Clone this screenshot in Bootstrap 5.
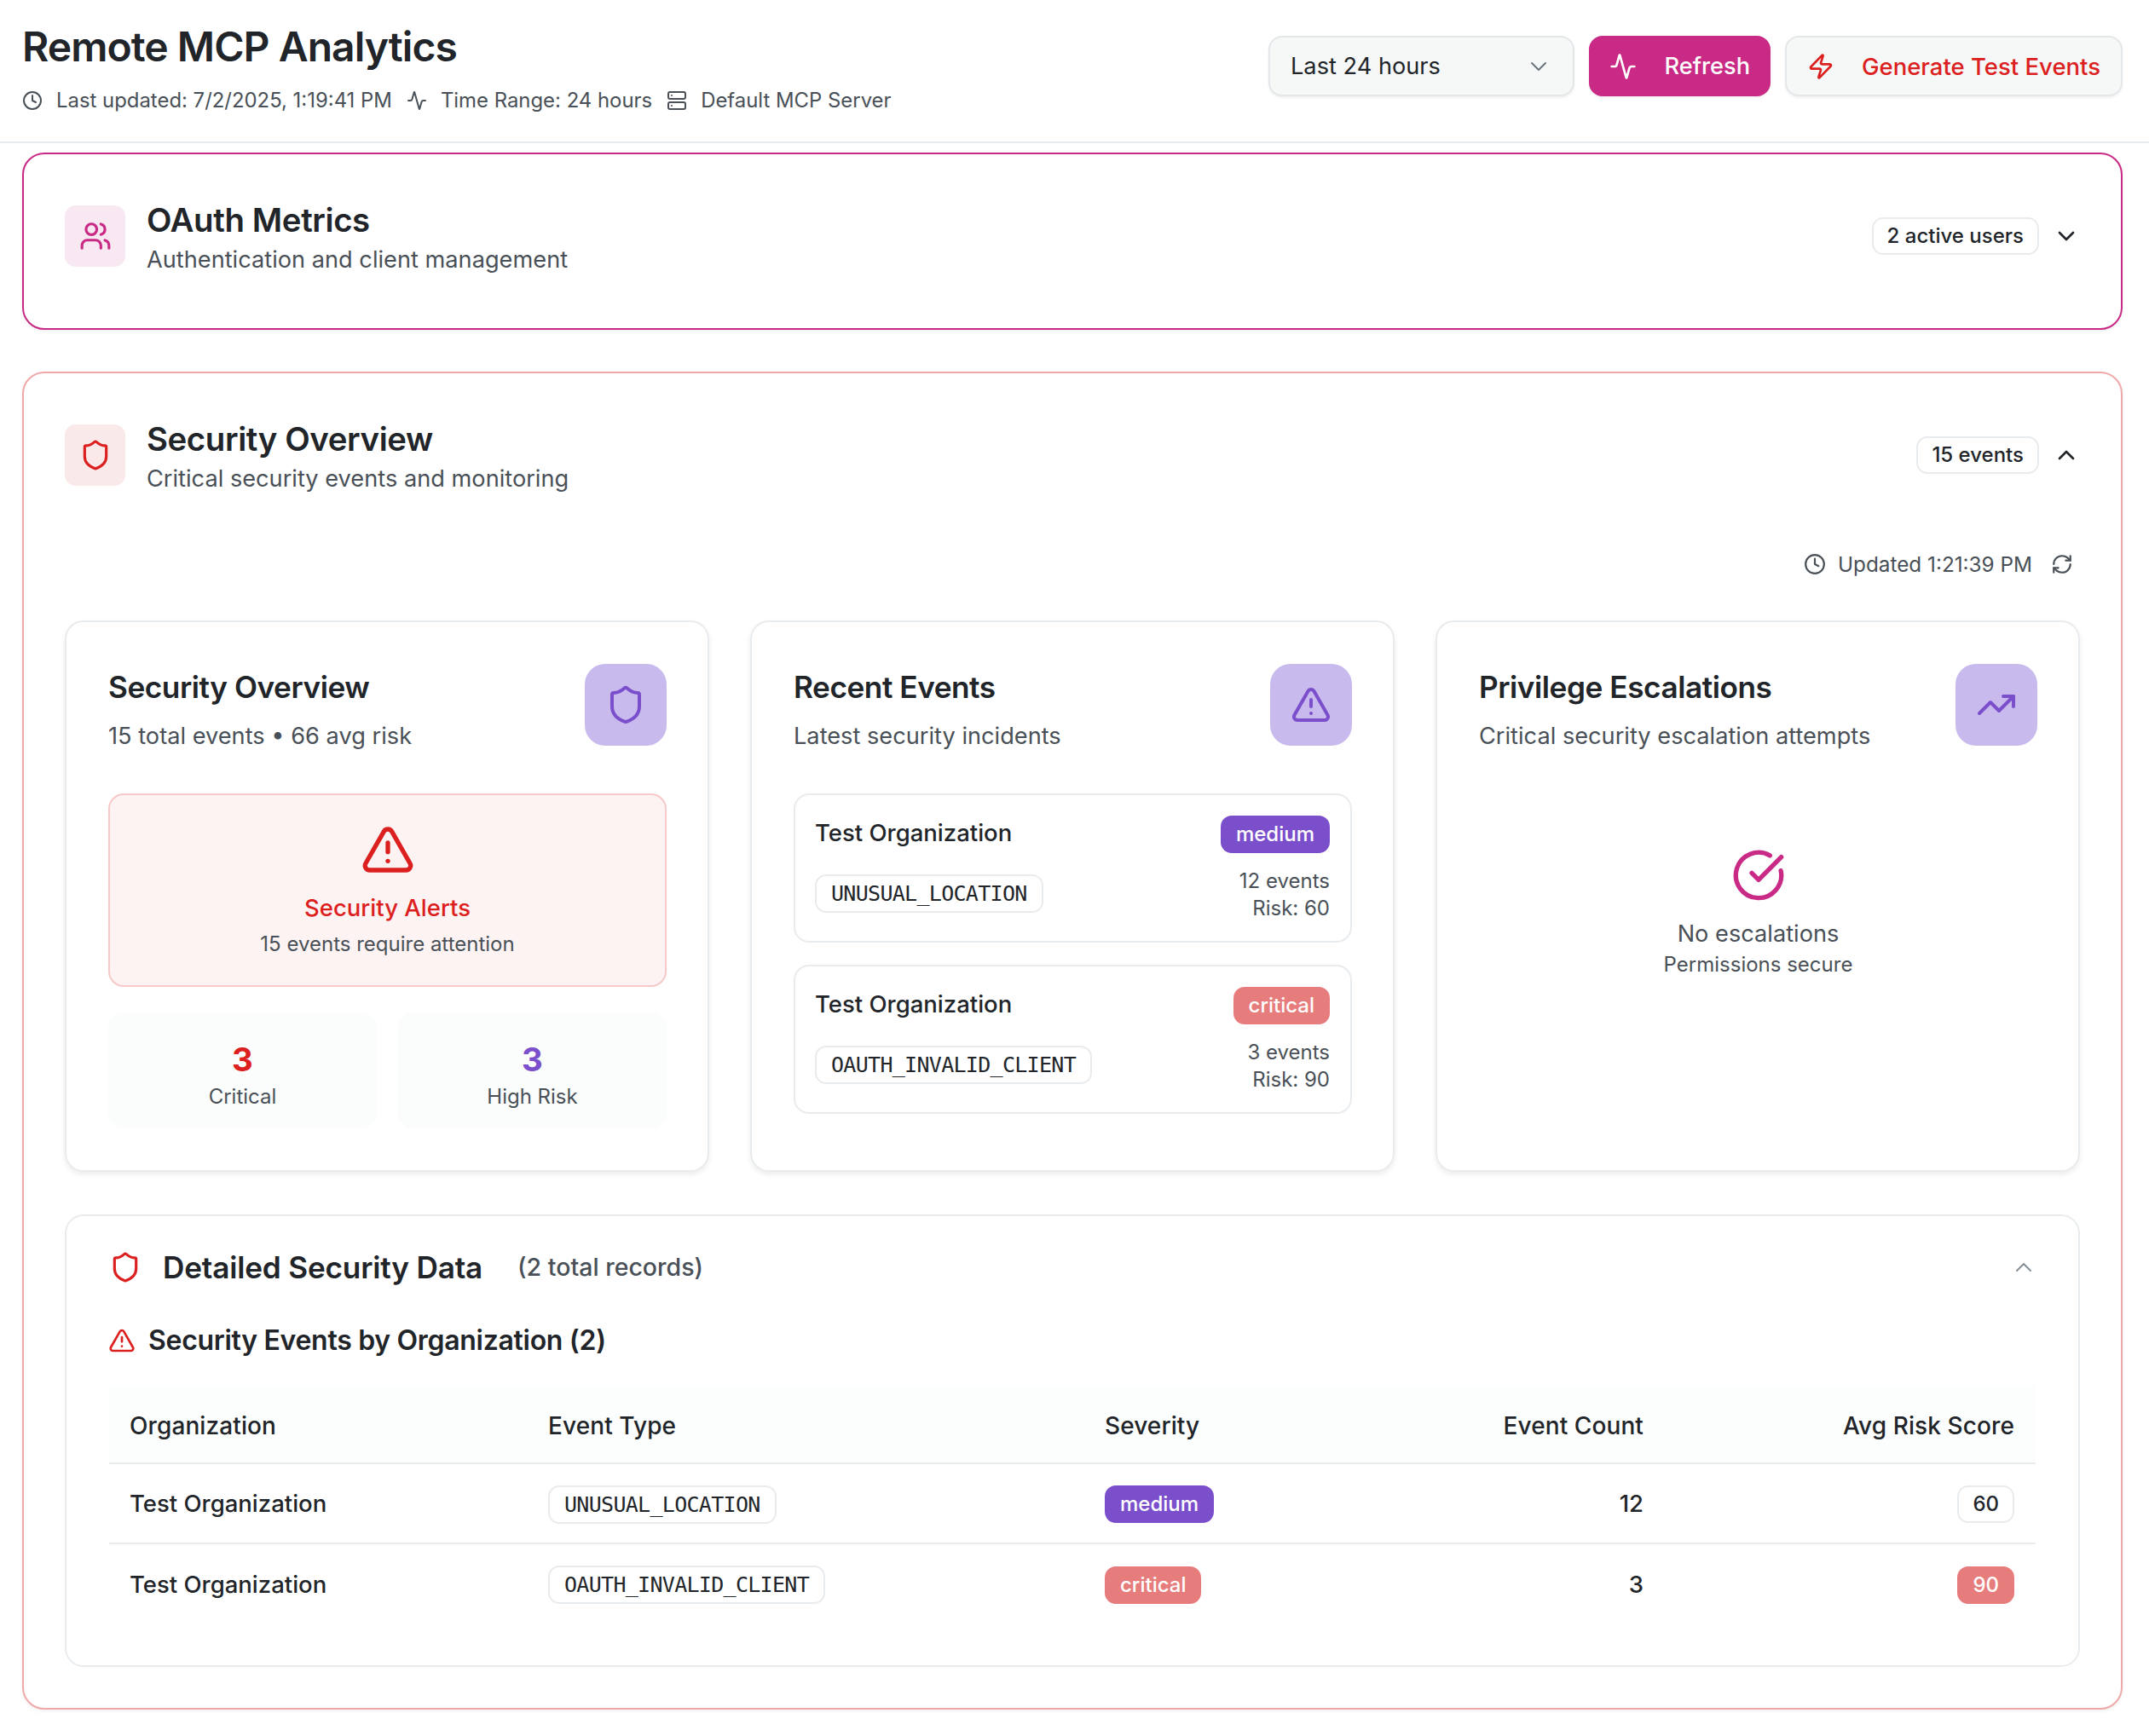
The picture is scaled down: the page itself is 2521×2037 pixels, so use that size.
<!DOCTYPE html>
<html lang="en">
<head>
    <meta charset="UTF-8">
    <meta name="viewport" content="width=device-width, initial-scale=1.0">
    <title>Remote MCP Analytics</title>
    <link href="https://cdn.jsdelivr.net/npm/bootstrap@5.3.0/dist/css/bootstrap.min.css" rel="stylesheet">
    <style>
        body {
            font-family: Inter, "Noto Sans", sans-serif;
            color: #212529;
            background: #fff;
            min-height: 2037px;
        }
        .ico { fill: none; stroke: currentColor; stroke-width: 2; stroke-linecap: round; stroke-linejoin: round; flex-shrink: 0; }
        .c-pink { color: #c92a85; }
        .c-red { color: #dc2020; }
        .c-purple { color: #7b4fcb; }

        .top-bar { height: 168px; padding: 0 31px 0 26px; border-bottom: 2px solid #e9ecef; }
        .page-title { font-size: 48px; font-weight: 600; line-height: 58px; margin: 26px 0 0; letter-spacing: -.95px; }
        .top-meta { font-size: 23.9px; color: #495057; margin-top: 18px; line-height: 32px; }
        .top-meta .ico { width: 24px; height: 24px; }
        .top-meta span { margin: 0 17px 0 16px; }
        .top-actions { gap: 17px; }
        .top-btn {
            height: 71px; margin-top: 42px; border-radius: 16px; font-size: 27.2px; font-weight: 500; padding: 2px 24px 0;
            border: 2px solid #e3e7ea; background: #f6f8f8; box-shadow: 0 2px 3px rgba(0,0,0,.06);
        }
        .range-btn { width: 359px; font-weight: 400; color: #212529; }
        .range-btn .ico { stroke-width: 1.5; }
        .refresh-btn { width: 213px; background: #c92a85; border-color: #c92a85; color: #fff; padding: 2px 22px 0; }
        .gen-btn { width: 396px; color: #dc2020; font-size: 27.5px; }
        .top-btn .ico { width: 32px; height: 32px; margin-top: -2px; }

        .panel { border-radius: 26px; background: #fff; box-shadow: 0 2px 4px rgba(0,0,0,.06); }
        .panel-oauth { border: 2px solid #c92a85; height: 208px; margin: 11px 31px 0 26px; padding: 60px 48px 0; }
        .panel-sec { border: 2px solid #f0a9a9; height: 1570px; margin: 49px 31px 0 26px; padding: 60px 48px 0; }
        .panel-head { height: 72px; }
        .icon-tile { width: 71px; height: 72px; border-radius: 13px; margin-right: 25px; }
        .icon-tile .ico { width: 38px; height: 38px; }
        .tile-pink { background: #f8e8f2; }
        .tile-red { background: #f9e9e9; }
        .panel-title { font-size: 38.4px; font-weight: 600; line-height: 44px; margin: -5px 0 0; letter-spacing: -.4px; }
        .panel-sub { font-size: 27.2px; color: #495057; line-height: 36px; margin-top: 7px; }
        .count-pill {
            font-size: 24px; font-weight: 500; height: 44px; line-height: 40px; padding: 0 16px; margin-right: 16px;
            border: 2px solid #e9ecef; border-radius: 13px; background: #fff;
        }
        .panel-chev { width: 32px; height: 32px; }

        .updated-row { height: 40px; margin-top: 72px; font-size: 24.3px; color: #495057; padding-right: 8px; }
        .updated-row .ico { width: 26px; height: 26px; }
        .updated-row span { margin: 0 22px 0 14px; }

        .stat-grid { display: grid; grid-template-columns: repeat(3, 1fr); gap: 48px; margin-top: 46px; }
        .stat-card {
            height: 647px; border: 2px solid #e9ecef; border-radius: 22px; padding: 48px 48px 48px 49px; background: #fff;
            box-shadow: 0 3px 6px rgba(0,0,0,.08);
        }
        .stat-title { font-size: 35.2px; font-weight: 600; line-height: 44px; margin: 6px 0 0; letter-spacing: -.45px; }
        .stat-sub { font-size: 27.2px; color: #495057; line-height: 36px; margin-top: 18px; }
        .stat-tile { width: 96px; height: 96px; margin-top: 1px; border-radius: 24px; background: #c8baec; color: #7b4fcb; }
        .stat-tile .ico { width: 48px; height: 48px; }
        .alert-box {
            height: 227px; margin-top: 49px; border: 2px solid #f7c9c9; border-radius: 18px; background: #fdf3f3;
            text-align: center; padding-top: 32px;
        }
        .alert-box .ico { width: 64px; height: 64px; display: block; margin: 0 auto; }
        .alert-title { font-size: 27.5px; font-weight: 500; color: #dc2020; line-height: 36px; margin-top: 18px; }
        .alert-sub { font-size: 24px; color: #495057; line-height: 32px; margin-top: 9px; }
        .mini-row { display: grid; grid-template-columns: 1fr 1fr; gap: 25px; margin-top: 30px; }
        .mini-box { height: 136px; border-radius: 18px; background: #fbfcfc; text-align: center; padding-top: 31px; }
        .mini-num { font-size: 38.4px; font-weight: 700; line-height: 48px; }
        .mini-label { font-size: 24px; color: #495057; line-height: 32px; margin-top: 4px; }

        .event-list { margin-top: 49px; display: flex; flex-direction: column; gap: 26px; }
        .event-item { height: 175px; border: 2px solid #e9ecef; border-radius: 18px; padding: 24px 24px 24px 23px; }
        .event-org { font-size: 27.5px; font-weight: 500; line-height: 36px; margin-top: 2px; }
        .sev-tag { display: inline-block; height: 44px; line-height: 44px; padding: 0 18px; border-radius: 13px; color: #fff; font-size: 24px; font-weight: 500; }
        .sev-medium { background: #7b4fcb; }
        .sev-critical { background: #e67c7c; }
        .code-chip {
            display: inline-block; height: 45px; line-height: 41px; padding: 0 17px; font-family: "DejaVu Sans Mono", "Liberation Mono", monospace;
            font-size: 25px; border: 2px solid #e9ecef; border-radius: 13px; background: #fff; letter-spacing: -.7px;
        }
        .event-meta { font-size: 24px; color: #495057; line-height: 32px; text-align: right; }
        .event-bottom { margin-top: 17px; }
        .event-bottom .code-chip { margin-top: 8px; }

        .no-esc { text-align: center; margin-top: 113px; }
        .no-esc .ico { width: 64px; height: 64px; }
        .no-esc-title { font-size: 27.2px; color: #495057; line-height: 36px; margin-top: 19px; }
        .no-esc-sub { font-size: 24px; color: #495057; line-height: 32px; margin-top: 2px; }

        .detail-card { height: 531px; margin-top: 50px; border: 2px solid #e9ecef; border-radius: 22px; padding: 35px 50px 0 50px; background: #fff; }
        .detail-head { height: 50px; }
        .detail-head > .ico { width: 38px; height: 38px; margin-left: 0; }
        .detail-title { font-size: 35.2px; font-weight: 600; margin: 0 0 0 25px; letter-spacing: -.2px; }
        .detail-count { font-size: 28.5px; font-weight: 500; color: #495057; margin-left: 41px; }
        .detail-head > .detail-chev { width: 32px; height: 32px; color: #868e96; margin-right: -2px; stroke-width: 1.5; }
        .group-head { height: 44px; margin-top: 39px; }
        .group-head .ico { width: 32px; height: 32px; margin-left: -1px; }
        .group-title { font-size: 32px; font-weight: 600; margin: 0 0 0 15px; letter-spacing: -.3px; }
        .data-wrap { margin-top: 32px; width: 2260px; }
        .data-table { table-layout: fixed; width: 100%; margin: 0; --bs-table-border-color: #e9ecef; }
        .data-table th, .data-table td { padding: 2px 25px 0 24px; vertical-align: middle; font-size: 27.5px; border-bottom: 2px solid #e9ecef; }
        .data-table th { height: 90px; font-size: 28px; font-weight: 500; background: #fcfdfd; --bs-table-bg: #fcfdfd; letter-spacing: .1px; }
        .data-table td { height: 94px; font-weight: 500; }
        .data-table tr:last-child td { border-bottom: 0; }
        .risk-tag { display: inline-block; height: 44px; line-height: 40px; padding: 0 16px; font-size: 24px; font-weight: 500; border: 2px solid #e9ecef; border-radius: 13px; }
        .risk-high { background: #e67c7c; border-color: #e67c7c; color: #fff; }
    </style>
</head>
<body>
    <svg width="0" height="0" class="position-absolute">
        <symbol id="i-clock" viewBox="0 0 24 24"><circle cx="12" cy="12" r="10"/><polyline points="12 6 12 12 16 14"/></symbol>
        <symbol id="i-activity" viewBox="0 0 24 24"><path d="M22 12h-2.48a2 2 0 0 0-1.93 1.46l-2.35 8.36a.25.25 0 0 1-.48 0L9.24 2.18a.25.25 0 0 0-.48 0l-2.35 8.36A2 2 0 0 1 4.49 12H2"/></symbol>
        <symbol id="i-server" viewBox="0 0 24 24"><rect x="2" y="2" width="20" height="8" rx="2"/><rect x="2" y="14" width="20" height="8" rx="2"/><line x1="6" y1="6" x2="6.01" y2="6"/><line x1="6" y1="18" x2="6.01" y2="18"/></symbol>
        <symbol id="i-zap" viewBox="0 0 24 24"><path d="M4 14a1 1 0 0 1-.78-1.63l9.9-10.2a.5.5 0 0 1 .86.46l-1.92 6.02A1 1 0 0 0 13 10h7a1 1 0 0 1 .78 1.63l-9.9 10.2a.5.5 0 0 1-.86-.46l1.92-6.02A1 1 0 0 0 11 14z"/></symbol>
        <symbol id="i-users" viewBox="0 0 24 24"><path d="M16 21v-2a4 4 0 0 0-4-4H6a4 4 0 0 0-4 4v2"/><circle cx="9" cy="7" r="4"/><path d="M22 21v-2a4 4 0 0 0-3-3.87"/><path d="M16 3.13a4 4 0 0 1 0 7.75"/></symbol>
        <symbol id="i-shield" viewBox="0 0 24 24"><path d="M20 13c0 5-3.5 7.5-7.66 8.95a1 1 0 0 1-.67-.01C7.5 20.5 4 18 4 13V6a1 1 0 0 1 1-1c2 0 4.5-1.2 6.24-2.72a1.17 1.17 0 0 1 1.52 0C14.51 3.81 17 5 19 5a1 1 0 0 1 1 1z"/></symbol>
        <symbol id="i-alert" viewBox="0 0 24 24"><path d="m21.73 18-8-14a2 2 0 0 0-3.48 0l-8 14A2 2 0 0 0 4 21h16a2 2 0 0 0 1.73-3"/><path d="M12 9v4"/><path d="M12 17h.01"/></symbol>
        <symbol id="i-trend" viewBox="0 0 24 24"><polyline points="22 7 13.5 15.5 8.5 10.5 2 17"/><polyline points="16 7 22 7 22 13"/></symbol>
        <symbol id="i-check" viewBox="0 0 24 24"><path d="M21.801 10A10 10 0 1 1 17 3.335"/><path d="m9 11 3 3L22 4"/></symbol>
        <symbol id="i-refresh" viewBox="0 0 24 24"><path d="M3 12a9 9 0 0 1 9-9 9.75 9.75 0 0 1 6.74 2.74L21 8"/><path d="M21 3v5h-5"/><path d="M21 12a9 9 0 0 1-9 9 9.75 9.75 0 0 1-6.74-2.74L3 16"/><path d="M8 16H3v5"/></symbol>
        <symbol id="i-down" viewBox="0 0 24 24"><path d="m6 9 6 6 6-6"/></symbol>
        <symbol id="i-up" viewBox="0 0 24 24"><path d="m18 15-6-6-6 6"/></symbol>
    </svg>

    <header class="top-bar d-flex justify-content-between">
        <div>
            <h1 class="page-title">Remote MCP Analytics</h1>
            <div class="top-meta d-flex align-items-center">
                <svg class="ico"><use href="#i-clock"/></svg><span>Last updated: 7/2/2025, 1:19:41 PM</span>
                <svg class="ico"><use href="#i-activity"/></svg><span>Time Range: 24 hours</span>
                <svg class="ico"><use href="#i-server"/></svg><span>Default MCP Server</span>
            </div>
        </div>
        <div class="top-actions d-flex align-items-start">
            <button class="btn top-btn range-btn d-flex align-items-center justify-content-between">
                Last 24 hours
                <svg class="ico text-secondary"><use href="#i-down"/></svg>
            </button>
            <button class="btn top-btn refresh-btn d-flex align-items-center justify-content-between">
                <svg class="ico"><use href="#i-activity"/></svg>Refresh
            </button>
            <button class="btn top-btn gen-btn d-flex align-items-center justify-content-between">
                <svg class="ico"><use href="#i-zap"/></svg>Generate Test Events
            </button>
        </div>
    </header>

    <section class="panel panel-oauth">
        <div class="panel-head d-flex align-items-center">
            <div class="icon-tile tile-pink c-pink d-flex align-items-center justify-content-center"><svg class="ico"><use href="#i-users"/></svg></div>
            <div class="flex-grow-1 align-self-start">
                <h2 class="panel-title">OAuth Metrics</h2>
                <div class="panel-sub">Authentication and client management</div>
            </div>
            <div class="count-pill">2 active users</div>
            <svg class="ico panel-chev"><use href="#i-down"/></svg>
        </div>
    </section>

    <section class="panel panel-sec">
        <div class="panel-head d-flex align-items-center">
            <div class="icon-tile tile-red c-red d-flex align-items-center justify-content-center"><svg class="ico"><use href="#i-shield"/></svg></div>
            <div class="flex-grow-1 align-self-start">
                <h2 class="panel-title">Security Overview</h2>
                <div class="panel-sub">Critical security events and monitoring</div>
            </div>
            <div class="count-pill">15 events</div>
            <svg class="ico panel-chev"><use href="#i-up"/></svg>
        </div>

        <div class="updated-row d-flex align-items-center justify-content-end">
            <svg class="ico"><use href="#i-clock"/></svg><span>Updated 1:21:39 PM</span>
            <svg class="ico"><use href="#i-refresh"/></svg>
        </div>

        <div class="stat-grid">
            <div class="stat-card">
                <div class="d-flex justify-content-between">
                    <div>
                        <h3 class="stat-title">Security Overview</h3>
                        <div class="stat-sub">15 total events • 66 avg risk</div>
                    </div>
                    <div class="stat-tile d-flex align-items-center justify-content-center"><svg class="ico"><use href="#i-shield"/></svg></div>
                </div>
                <div class="alert-box">
                    <svg class="ico c-red"><use href="#i-alert"/></svg>
                    <div class="alert-title">Security Alerts</div>
                    <div class="alert-sub">15 events require attention</div>
                </div>
                <div class="mini-row">
                    <div class="mini-box">
                        <div class="mini-num c-red">3</div>
                        <div class="mini-label">Critical</div>
                    </div>
                    <div class="mini-box">
                        <div class="mini-num c-purple">3</div>
                        <div class="mini-label">High Risk</div>
                    </div>
                </div>
            </div>

            <div class="stat-card">
                <div class="d-flex justify-content-between">
                    <div>
                        <h3 class="stat-title">Recent Events</h3>
                        <div class="stat-sub">Latest security incidents</div>
                    </div>
                    <div class="stat-tile d-flex align-items-center justify-content-center"><svg class="ico"><use href="#i-alert"/></svg></div>
                </div>
                <div class="event-list">
                    <div class="event-item">
                        <div class="d-flex justify-content-between align-items-start">
                            <div class="event-org">Test Organization</div>
                            <span class="sev-tag sev-medium">medium</span>
                        </div>
                        <div class="event-bottom d-flex justify-content-between align-items-start">
                            <span class="code-chip">UNUSUAL_LOCATION</span>
                            <div class="event-meta">12 events<br>Risk: 60</div>
                        </div>
                    </div>
                    <div class="event-item">
                        <div class="d-flex justify-content-between align-items-start">
                            <div class="event-org">Test Organization</div>
                            <span class="sev-tag sev-critical">critical</span>
                        </div>
                        <div class="event-bottom d-flex justify-content-between align-items-start">
                            <span class="code-chip">OAUTH_INVALID_CLIENT</span>
                            <div class="event-meta">3 events<br>Risk: 90</div>
                        </div>
                    </div>
                </div>
            </div>

            <div class="stat-card">
                <div class="d-flex justify-content-between">
                    <div>
                        <h3 class="stat-title">Privilege Escalations</h3>
                        <div class="stat-sub">Critical security escalation attempts</div>
                    </div>
                    <div class="stat-tile d-flex align-items-center justify-content-center"><svg class="ico"><use href="#i-trend"/></svg></div>
                </div>
                <div class="no-esc">
                    <svg class="ico c-pink"><use href="#i-check"/></svg>
                    <div class="no-esc-title">No escalations</div>
                    <div class="no-esc-sub">Permissions secure</div>
                </div>
            </div>
        </div>

        <div class="detail-card">
            <div class="detail-head d-flex align-items-center">
                <svg class="ico c-red"><use href="#i-shield"/></svg>
                <h3 class="detail-title">Detailed Security Data</h3>
                <span class="detail-count">(2 total records)</span>
                <svg class="ico detail-chev ms-auto"><use href="#i-up"/></svg>
            </div>
            <div class="group-head d-flex align-items-center">
                <svg class="ico c-red"><use href="#i-alert"/></svg>
                <h4 class="group-title">Security Events by Organization (2)</h4>
            </div>
            <div class="data-wrap">
                <table class="table data-table">
                    <colgroup><col width="491"><col width="653"><col width="340"><col width="341"><col width="435"></colgroup>
                    <thead>
                        <tr>
                            <th>Organization</th>
                            <th>Event Type</th>
                            <th>Severity</th>
                            <th class="text-end">Event Count</th>
                            <th class="text-end">Avg Risk Score</th>
                        </tr>
                    </thead>
                    <tbody>
                        <tr>
                            <td>Test Organization</td>
                            <td><span class="code-chip">UNUSUAL_LOCATION</span></td>
                            <td><span class="sev-tag sev-medium">medium</span></td>
                            <td class="text-end">12</td>
                            <td class="text-end"><span class="risk-tag">60</span></td>
                        </tr>
                        <tr>
                            <td>Test Organization</td>
                            <td><span class="code-chip">OAUTH_INVALID_CLIENT</span></td>
                            <td><span class="sev-tag sev-critical">critical</span></td>
                            <td class="text-end">3</td>
                            <td class="text-end"><span class="risk-tag risk-high">90</span></td>
                        </tr>
                    </tbody>
                </table>
            </div>
        </div>
    </section>

    <script src="https://cdn.jsdelivr.net/npm/bootstrap@5.3.0/dist/js/bootstrap.bundle.min.js"></script>
</body>
</html>
